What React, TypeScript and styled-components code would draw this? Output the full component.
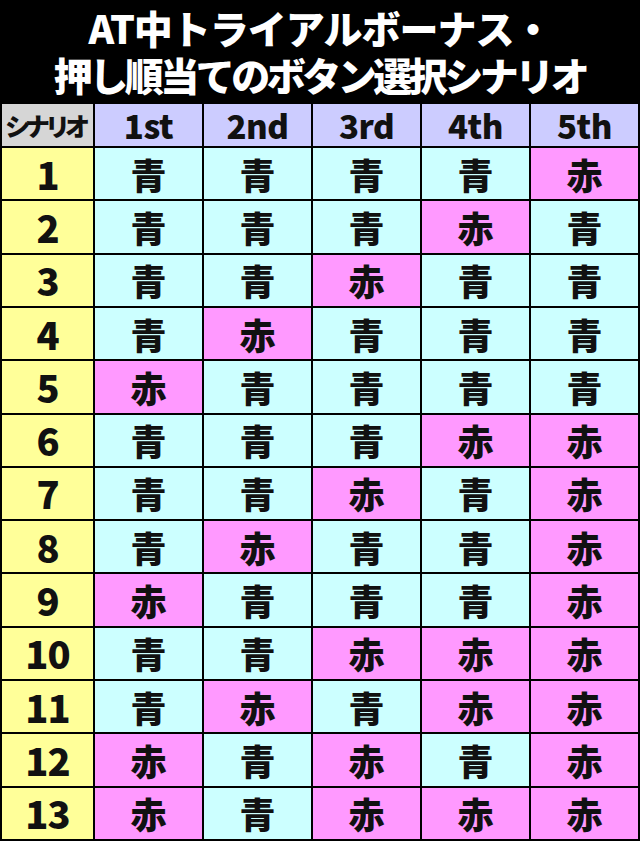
import React from "react";
import styled, { createGlobalStyle } from "styled-components";

const scenarios = [
  "BBBBR",
  "BBBRB",
  "BBRBB",
  "BRBBB",
  "RBBBB",
  "BBBRR",
  "BBRBR",
  "BRBBR",
  "RBBBR",
  "BBRRR",
  "BRBRR",
  "RBRBR",
  "RBRRR",
];

const steps = ["1st", "2nd", "3rd", "4th", "5th"];

const GlobalStyle = createGlobalStyle`
  html, body {
    margin: 0;
    padding: 0;
    background: #000;
  }
  body {
    font-family: "Noto Sans CJK JP", "Noto Sans", sans-serif;
  }
`;

const Root = styled.div`
  width: 640px;
  height: 841px;
  background: #000;
  display: flex;
  flex-direction: column;
  overflow: hidden;
`;

const Title = styled.h1`
  margin: 0;
  height: 102px;
  box-sizing: border-box;
  padding-top: 4px;
  display: flex;
  flex-direction: column;
  align-items: center;
  color: #fff;
  font-size: 39px;
  font-weight: 900;
`;

const TitleLine = styled.span<{ $spacing: number }>`
  display: block;
  height: 47px;
  line-height: 47px;
  letter-spacing: ${(p) => p.$spacing}px;
  white-space: nowrap;
`;

const Grid = styled.div`
  flex: 1;
  display: grid;
  grid-template-columns: 91px repeat(5, 1fr);
  grid-template-rows: 42px repeat(13, 1fr);
  gap: 2px;
  padding: 2px;
  background: #000;
`;

const Cell = styled.div<{ $bg: string }>`
  display: flex;
  align-items: center;
  justify-content: center;
  background: ${(p) => p.$bg};
  color: #111;
  font-weight: 900;
  line-height: 1;
`;

const CornerCell = styled(Cell)`
  font-size: 25px;
  letter-spacing: -5px;
  padding-right: 5px;
`;

const HeadCell = styled(Cell)`
  font-size: 33px;
  letter-spacing: -0.5px;
`;

const NumCell = styled(Cell)`
  font-size: 38px;
  letter-spacing: -1px;
`;

const ColorCell = styled(Cell)`
  font-size: 36px;
`;

const App = () => {
  return (
    <Root>
      <GlobalStyle />
      <Title>
        <TitleLine $spacing={-1}>AT中トライアルボーナス・</TitleLine>
        <TitleLine $spacing={-3.5}>押し順当てのボタン選択シナリオ</TitleLine>
      </Title>
      <Grid>
        <CornerCell $bg="#d6d6d6">シナリオ</CornerCell>
        {steps.map((s) => (
          <HeadCell key={s} $bg="#ccccff">
            {s}
          </HeadCell>
        ))}
        {scenarios.map((row, i) => (
          <React.Fragment key={i}>
            <NumCell $bg="#ffff99">{i + 1}</NumCell>
            {row.split("").map((c, j) =>
              c === "R" ? (
                <ColorCell key={j} $bg="#ff99ff">
                  赤
                </ColorCell>
              ) : (
                <ColorCell key={j} $bg="#ccffff">
                  青
                </ColorCell>
              )
            )}
          </React.Fragment>
        ))}
      </Grid>
    </Root>
  );
};

export default App;
